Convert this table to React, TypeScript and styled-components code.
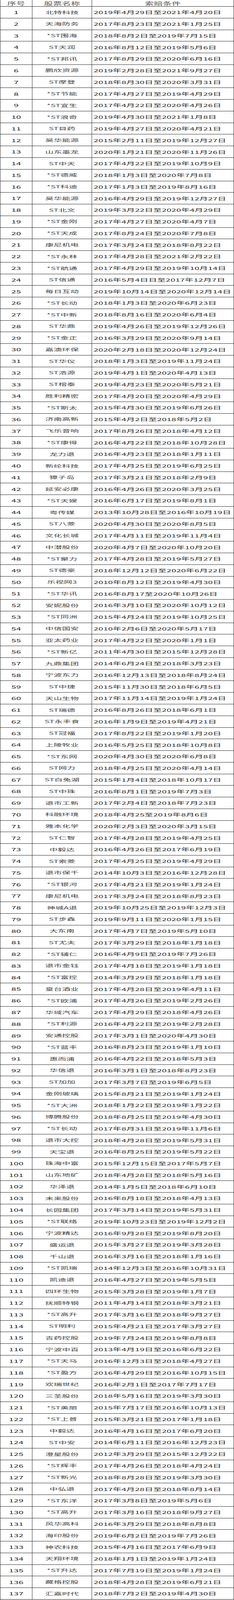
import React from "react";
import styled, { createGlobalStyle } from "styled-components";

const GlobalStyle = createGlobalStyle`
  html, body {
    margin: 0;
    padding: 0;
    background: #fff;
  }
  body {
    font-family: "Noto Sans CJK SC", "Noto Sans", sans-serif;
  }
`;

const ROWS = [
  "北特科技|2019年4月29日至2021年4月20日",
  "天海防务|2017年8月23日至2021年1月25日",
  "*ST围海|2018年8月2日至2019年7月15日",
  "ST天润|2016年8月12日至2019年5月6日",
  "*ST邦讯|2017年8月29日至2020年6月16日",
  "鹏欣资源|2019年2月28日至2021年9月27日",
  "ST摩登|2018年8月30日至2020年3月31日",
  "*ST节能|2017年4月27日至2019年4月29日",
  "*ST宜生|2017年4月22日至2020年4月26日",
  "*ST浪奇|2019年4月30日至2021年1月8日",
  "ST目药|2019年4月27日至2020年4月21日",
  "昊华能源|2015年2月11日至2019年12月27日",
  "山东墨龙|2020年1月21日至2020年11月26日",
  "ST中天|2017年4月22日至2019年10月9日",
  "*ST德威|2018年1月3日至2020年7月8日",
  "*ST科迪|2017年1月3日至2019年8月16日",
  "昊华能源|2016年4月29日至2019年12月27日",
  "ST北文|2019年3月22日至2020年4月29日",
  "*ST金刚|2017年4月27日至2020年4月7日",
  "*ST天成|2017年8月24日至2020年7月8日",
  "康尼机电|2017年3月24日至2018年8月22日",
  "*ST永林|2017年4月28日至2021年2月22日",
  "*ST航通|2017年4月29日至2019年10月14日",
  "ST信通|2016年5月4日日至2017年12月7日",
  "每日互动|2019年10月14日至2020年12月14日",
  "*ST长动|2018年1月3日至2020年6月23日",
  "*ST中新|2018年8月16日至2020年6月4日",
  "ST华鼎|2019年4月26日至2019年12月26日",
  "*ST金正|2016年3月29日至2020年9月14日",
  "嘉澳环保|2020年2月18日至2020年12月24日",
  "ST华仪|2018年1月3日至2019年11月24日",
  "ST浩源|2019年4月1日至2020年4月13日",
  "ST榕泰|2019年4月23日至2020年5月21日",
  "胜利精密|2017年4月20日至2020年4月29日",
  "*ST斯太|2015年4月30日至2019年6月26日",
  "济南高新|2015年4月2日至2018年5月2日",
  "飞乐音响|2017年8月26日至2018年4月12日",
  "*ST康得|2016年4月22日至2018年10月28日",
  "龙力退|2016年4月23日至2018年1月11日",
  "新纶科技|2017年4月25日至2019年6月25日",
  "獐子岛|2017年3月21日至2018年2月9日",
  "延安必康|2016年4月26日至2020年3月25日",
  "*ST天娱|2016年6月17日至2019年8月1日",
  "粤传媒|2013年10月28日至2016年10月19日",
  "ST八菱|2020年4月30日至2020年8月5日",
  "文化长城|2017年4月11日至2019年11月4日",
  "中潜股份|2020年4月7日至2020年10月20日",
  "*ST聚力|2017年4月28日至2019年5月27日",
  "ST德豪|2018年12月12日至2020年6月22日",
  "乐视网3|2010年8月12日至2019年4月30日",
  "*ST华讯|2016年8月17至2020年10月26日",
  "安妮股份|2016年3月10日至2020年10月12日",
  "*ST同洲|2015年4月24日至2019年10月25日",
  "中信国安|2010年2月6日至2020年5月17日",
  "亚太药业|2017年4月22日至2020年1月1日",
  "*ST新亿|2011年4月30日至2015年12月28日",
  "九鼎集团|2014年6月24日至2018年3月23日",
  "宁波东力|2016年12月13日至2018年8月24日",
  "ST中捷|2015年11月30日至2018年6月5日",
  "天山生物|2017年11月14日至2019年1月24日",
  "ST瑞德|2016年8月26日至2018年6月1日",
  "ST永丰食|2016年1月9日至2019年4月21日",
  "ST冠福|2017年8月22日至2019年1月20日",
  "上陵牧业|2016年5月25日至2018年10月8日",
  "*ST东网|2020年4月30日至2020年6月8日",
  "ST网力|2018年4月25日至2020年4月14日",
  "ST白兔湖|2015年1月4日至2018年10月17日",
  "ST中珠|2016年8月1日至2019年7月3日",
  "退市工新|2017年2月4日至2018年7月23日",
  "科融环境|2018年4月25至2019年8月6日",
  "雅本化学|2020年2月3日至2020年3月15日",
  "ST仁智|2017年4月28日至2019年4月25日",
  "中毅达|2016年4月26日至2017年6月19日",
  "ST索菱|2017年4月25日至2019年4月29日",
  "退市保千|2014年10月3日至2016年12月28日",
  "*ST银河|2017年4月21日至2019年1月24日",
  "康尼机电|2017年3月24日至2018年8月23日",
  "神城A退|2019年10月25日至2019年12月3日",
  "ST步森|2019年9月11日至2020年1月15日",
  "大东南|2017年4月7日至2019年5月10日",
  "ST尤夫|2017年3月29日至2018年1月18日",
  "*ST辅仁|2016年4月9日至2019年7月26日",
  "退市金钰|2017年4月18日至2019年1月18日",
  "*ST富控|2014年3月29日至2018年1月18日",
  "皇台酒业|2017年4月28日至2019年4月11日",
  "*ST欧浦|2017年4月26日至2019年2月26日",
  "华域汽车|2017年4月29日至2018年4月26日",
  "*ST利源|2016年4月22日至2019年2月28日",
  "安通控股|2017年3月1日至2020年4月30日",
  "*ST蓝丰|2016年8月23日至2019年1月10日",
  "惠而浦|2016年4月22日至2018年5月3日",
  "华信退|2016年3月1日至2018年8月23日",
  "ST加加|2017年3月7日至2019年6月5日",
  "金刚玻璃|2015年8月21日至2019年1月24日",
  "*ST大洲|2018年1月22日至2019年1月22日",
  "博腾股份|2018年8月25日至2019年4月30日",
  "*ST长动|2017年8月31日至2019年11月6日",
  "退市大控|2018年4月28日至2019年5月31日",
  "天宝退|2016年8月25日至2019年5月22日",
  "珠海中富|2015年12月15日至2017年5月7日",
  "山东地矿|2018年4月28日至2018年5月16日",
  "华泽退|2014年1月5日至2018年6月10日",
  "未来股份|2016年8月18日至2018年4月13日",
  "长园集团|2017年3月14日至2019年5月31日",
  "*ST联络|2019年10月23日至2019年12月2日",
  "宁波精达|2016年9月28日至2019年8月20日",
  "盛运退|2015年3月27日至2019年3月28日",
  "千山退|2016年3月16日至2018年1月16日",
  "*ST凯瑞|2014年12月3日至2016年10月31日",
  "凯迪退|2016年4月27日至2019年5月5日",
  "四环生物|2015年3月28日至2019年1月7日",
  "抚顺特钢|2011年4月14日至2018年3月21日",
  "*ST高升|2017年3月16日至2018年9月27日",
  "ST明利|2015年4月21日至2017年3月27日",
  "吉药控股|2019年7月24日至2019年8月8日",
  "宁波中百|2013年4月19日至2016年6月22日",
  "*ST天马|2016年12月3日至2018年4月27日",
  "*ST盈方|2016年4月29日至2016年10月15日",
  "欢瑞世纪|2016年2月1日至2017年7月17日",
  "三圣股份|2018年5月16日至2019年3月30日",
  "*ST美丽|2015年7月17日至2016年10月13日",
  "*ST上普|2015年3月21日至2017年1月18日",
  "中毅达|2016年4月16日至2017年6月20日",
  "ST中安|2014年6月11日至2016年12月23日",
  "澄星股份|2012年3月29日至2015年12月22日",
  "*ST辉丰|2017年4月26日至2018年4月24日",
  "*ST新光|2018年8月28日至2019年3月30日",
  "中弘退|2017年4月28日至2018年8月14日",
  "*ST东洋|2017年3月8日至2019年5月6日",
  "*ST高升|2017年3月16日至2018年9月27日",
  "风华高科|2016年3月29日至2018年8月8日",
  "海印股份|2019年6月2日至2019年7月26日",
  "神农科技|2015年4月16日至2017年6月9日",
  "天翔环境|2018年1月1日至2019年1月24日",
  "*ST升达|2017年7月19日至2019年1月24日",
  "藏格控股|2018年4月28日至2019年6月21日",
  "汇嘉时代|2018年7月2日至2019年4月30日",
];

// the capture window tops out at 4096px high, so the 7690px sheet is
// squeezed into it with the same proportions (header 32 of 7690)
const FRAME_H = 4096;
const K = FRAME_H / 7690;
const HEAD_H = 32 * K;
const ROW_H = (FRAME_H - HEAD_H) / ROWS.length;

const Sheet = styled.div`
  width: 600px;
  height: ${FRAME_H}px;
  box-sizing: border-box;
  border-left: 1px solid #2a2a2a;
  display: flex;
  flex-direction: column;
  overflow: hidden;
`;

const Row = styled.div<{ $head?: boolean }>`
  flex: none;
  display: grid;
  grid-template-columns: 82px 153px 1fr;
  height: ${(p) => (p.$head ? HEAD_H : ROW_H)}px;
  box-sizing: border-box;
  border-bottom: 1px solid #2a2a2a;
`;

const Cell = styled.div<{ $left?: boolean }>`
  box-sizing: border-box;
  min-width: 0;
  border-right: 1px solid #2a2a2a;
  display: flex;
  align-items: center;
  justify-content: ${(p) => (p.$left ? "flex-start" : "center")};
  padding-left: ${(p) => (p.$left ? "4px" : "0")};
  overflow: hidden;
`;

const Text = styled.span<{ $tone: string; $size: number; $squash: number }>`
  display: inline-block;
  font-family: "Noto Sans CJK SC", "Noto Sans", sans-serif;
  font-size: ${(p) => p.$size}px;
  line-height: 1;
  color: ${(p) => p.$tone};
  white-space: nowrap;
  transform: scaleY(${(p) => p.$squash});
  transform-origin: center;
`;

export default function App() {
  return (
    <>
      <GlobalStyle />
      <Sheet>
        <Row $head>
          {["序号", "股票名称", "索赔条件"].map((t) => (
            <Cell key={t}>
              <Text $tone="#555" $size={23} $squash={K}>{t}</Text>
            </Cell>
          ))}
        </Row>
        {ROWS.map((row, i) => {
          const [name, period] = row.split("|");
          return (
            <Row key={i}>
              <Cell>
                <Text $tone="#222" $size={22.5} $squash={K * 0.92}>{i + 1}</Text>
              </Cell>
              <Cell>
                <Text $tone="#444" $size={21.5} $squash={K * 0.92}>{name}</Text>
              </Cell>
              <Cell $left>
                <Text $tone="#2a2a2a" $size={22.2} $squash={K * 0.92}>{period}</Text>
              </Cell>
            </Row>
          );
        })}
      </Sheet>
    </>
  );
}
